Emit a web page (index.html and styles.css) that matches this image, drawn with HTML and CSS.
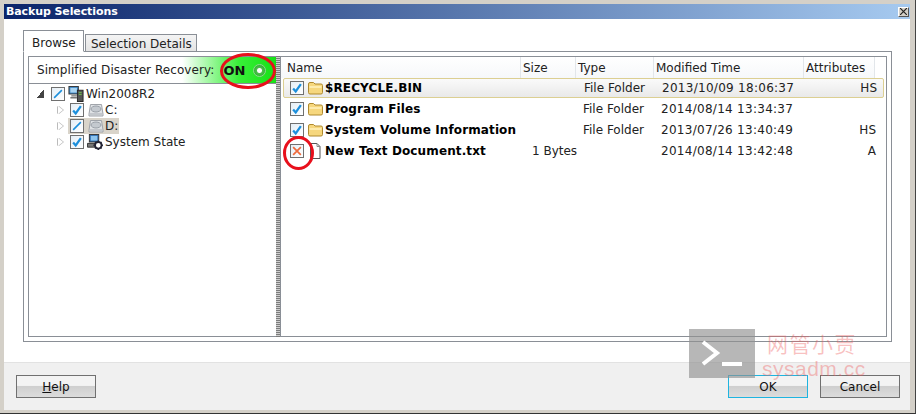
FILE: index.html
```html
<!DOCTYPE html>
<html lang="en">
<head>
  <meta charset="UTF-8" />
  <title>Backup Selections</title>
  <link rel="stylesheet" href="styles.css">
</head>
<body>
  <svg class="defs" width="0" height="0">
    <symbol id="check" viewBox="0 0 14 14"><path d="M2.5 7.5 L5.5 11 L11.5 2.5" fill="none" stroke="#1c8fdc" stroke-width="2.6"/></symbol>
    <symbol id="slash" viewBox="0 0 14 14"><path d="M2.5 11.5 L11.5 2.5" fill="none" stroke="#1c8fdc" stroke-width="1.8"/></symbol>
    <symbol id="cross" viewBox="0 0 14 14"><path d="M2.5 2.5 L11.5 11.5 M11.5 2.5 L2.5 11.5" fill="none" stroke="#ee6a3c" stroke-width="2"/></symbol>
    <symbol id="folder" viewBox="0 0 16 14">
      <path d="M1 3 Q1 1.500 2.500 1.500 H6 L7.500 3 H13.500 Q15 3 15 4.500 V11.500 Q15 13 13.500 13 H2.500 Q1 13 1 11.500 Z" fill="#f6d77e" stroke="#b08a2e"/>
      <path d="M2 6 H14" stroke="#fff2bf" stroke-width="1.500"/>
    </symbol>
    <symbol id="file" viewBox="0 0 12 16"><path d="M1.500 .5 H8 L11 3.500 V15.500 H1.500 Z" fill="#fff" stroke="#555"/><path d="M8 .5 V3.500 H11" fill="none" stroke="#888"/></symbol>
    <symbol id="disk" viewBox="0 0 16 14">
      <path d="M2.500 1.500 H13.500 L15 11 V13 H1 V11 Z" fill="#dfe2e5" stroke="#a0a4aa"/>
      <ellipse cx="8" cy="6" rx="5" ry="3" fill="#c4c9cf" stroke="#9aa0a8"/>
      <path d="M2 11 H14" stroke="#a8adb4"/>
    </symbol>
    <symbol id="server" viewBox="0 0 16 17">
      <rect x=".5" y=".5" width="10" height="8" fill="#3d86c6" stroke="#333"/>
      <rect x="2" y="2" width="7" height="5" fill="#a9d4f2"/>
      <rect x="9.500" y="4.500" width="6" height="12" fill="#555" stroke="#222"/>
      <path d="M11 7 H14 M11 9 H14" stroke="#6fc24a"/>
      <path d="M3 10.500 H9 M2 12.500 H9" stroke="#777" stroke-width="1.500"/>
    </symbol>
    <symbol id="state" viewBox="0 0 17 17">
      <rect x="2.500" y=".5" width="10" height="8" fill="#2d6fb4" stroke="#333"/>
      <rect x="4" y="2" width="7" height="5" fill="#8cc4ee"/>
      <path d="M.5 10 H9 V14 H.5 Z" fill="#777" stroke="#333"/>
      <circle cx="12" cy="12" r="3.500" fill="#fff" stroke="#223" stroke-width="2"/>
      <path d="M12 6.800 V8 M12 16 V17 M6.800 12 H8 M16 12 H17 M8.500 8.500 L9.400 9.400 M14.600 14.600 L15.500 15.500 M15.500 8.500 L14.600 9.400 M9.400 14.600 L8.500 15.500" stroke="#223" stroke-width="1.500"/>
    </symbol>
  </svg>

  <div class="window">
    <div class="titlebar">
      <span class="title">Backup Selections</span>
      <span class="close">
        <svg width="7" height="7" viewBox="0 0 7 7"><path d="M0 0 L7 7 M7 0 L0 7" stroke="#222" stroke-width="1.200"/></svg>
      </span>
    </div>

    <div class="content">
      <div class="tabs">
        <div class="tab active">Browse</div>
        <div class="tab">Selection Details</div>
      </div>

      <div class="panel">
        <div class="left">
          <div class="sdr">
            <span class="sdr-label">Simplified Disaster Recovery:</span>
            <b class="on">ON</b>
            <span class="led"></span>
          </div>
          <div class="tree">
            <div class="node root">
              <span class="tri open"></span>
              <span class="cb"><svg><use href="#slash"/></svg></span>
              <svg class="ico-server"><use href="#server"/></svg>
              <span class="label">Win2008R2</span>
            </div>
            <div class="node">
              <span class="tri"></span>
              <div class="node-body">
                <span class="cb"><svg><use href="#check"/></svg></span>
                <svg class="ico-disk"><use href="#disk"/></svg>
                <span class="label">C:</span>
              </div>
            </div>
            <div class="node">
              <span class="tri"></span>
              <div class="node-body current">
                <span class="cb"><svg><use href="#slash"/></svg></span>
                <svg class="ico-disk"><use href="#disk"/></svg>
                <span class="label">D:</span>
              </div>
            </div>
            <div class="node">
              <span class="tri"></span>
              <div class="node-body">
                <span class="cb"><svg><use href="#check"/></svg></span>
                <svg class="ico-server"><use href="#state"/></svg>
                <span class="label">System State</span>
              </div>
            </div>
          </div>
        </div>

        <div class="splitter"></div>

        <div class="right">
          <div class="row head">
            <div class="th">Name</div>
            <div class="th">Size</div>
            <div class="th">Type</div>
            <div class="th">Modified Time</div>
            <div class="th">Attributes</div>
          </div>
          <div class="row item selected">
            <div class="name"><span class="cb"><svg><use href="#check"/></svg></span><svg class="ico-folder"><use href="#folder"/></svg><b>$RECYCLE.BIN</b></div>
            <div class="size"></div>
            <div class="type">File Folder</div>
            <div class="time">2013/10/09 18:06:37</div>
            <div class="attr">HS</div>
          </div>
          <div class="row item">
            <div class="name"><span class="cb"><svg><use href="#check"/></svg></span><svg class="ico-folder"><use href="#folder"/></svg><b>Program Files</b></div>
            <div class="size"></div>
            <div class="type">File Folder</div>
            <div class="time">2014/08/14 13:34:37</div>
            <div class="attr"></div>
          </div>
          <div class="row item">
            <div class="name"><span class="cb"><svg><use href="#check"/></svg></span><svg class="ico-folder"><use href="#folder"/></svg><b>System Volume Information</b></div>
            <div class="size"></div>
            <div class="type">File Folder</div>
            <div class="time">2013/07/26 13:40:49</div>
            <div class="attr">HS</div>
          </div>
          <div class="row item">
            <div class="name"><span class="cb"><svg><use href="#cross"/></svg></span><svg class="ico-file"><use href="#file"/></svg><b>New Text Document.txt</b></div>
            <div class="size">1 Bytes</div>
            <div class="type"></div>
            <div class="time">2014/08/14 13:42:48</div>
            <div class="attr">A</div>
          </div>
        </div>
      </div>
    </div>

    <div class="footer">
      <button class="btn"><u>H</u>elp</button>
      <div class="actions">
        <button class="btn default">OK</button>
        <button class="btn">Cancel</button>
      </div>
    </div>
  </div>

  <!-- red marks drawn over the screenshot -->
  <div class="ring ring-on"></div>
  <div class="ring ring-x"></div>

  <!-- site watermark -->
  <div class="wm-box">
    <svg width="66" height="49" viewBox="0 0 66 49"><path d="M14 13 L28 24 L14 35" fill="none" stroke="#fff" stroke-width="4"/><path d="M33 35 H53" stroke="#fff" stroke-width="4"/></svg>
  </div>
  <div class="wm-text">
    <div class="wm-cn">网管小贾</div>
    <div class="wm-en">sysadm.cc</div>
  </div>
</body>
</html>
```

FILE: styles.css
```css
html, body { margin: 0; padding: 0; }
body { width: 916px; height: 414px; overflow: hidden; position: relative; font-family: "DejaVu Sans", sans-serif; font-size: 12px; color: #222; background: #d4d0c8; }
.defs { position: absolute; }

.window { height: 414px; box-sizing: border-box; padding: 4px 5px 3px 4px; display: flex; flex-direction: column; border-right: 1px solid #444; border-bottom: 1px solid #333; }

.titlebar { flex: none; height: 15px; display: flex; align-items: center; justify-content: space-between; padding: 0 1px 0 2px; background: linear-gradient(to right, #0a246a, #a6caf0); }
.title { color: #fff; font-weight: bold; font-size: 11px; letter-spacing: -.1px; }
.close { width: 11px; height: 10px; display: flex; align-items: center; justify-content: center; background: #d4d0c8; border: 1px solid; border-color: #fff #555 #555 #fff; box-sizing: border-box; }

.content { flex: 1; background: #fff; padding: 11px 18px 20px 19px; display: flex; flex-direction: column; min-height: 0; }

.tabs { flex: none; height: 22px; display: flex; align-items: flex-end; margin-bottom: -1px; position: relative; z-index: 1; }
.tab { height: 18px; box-sizing: border-box; padding: 1px 5px 0 5px; width: 112px; margin-left: 1px; border: 1px solid #8a8f96; border-bottom: 1px solid #8a8f96; background: linear-gradient(#f4f4f4, #e4e4e4); white-space: nowrap; line-height: 16px; }
.tab.active { width: 61px; margin-left: 0; height: 22px; padding: 4px 0 0 8px; background: #fff; border-bottom-color: #fff; }

.panel { flex: 1; min-height: 0; border: 1px solid #8a8f96; padding: 4px; display: flex; }
.left { width: 248px; flex: none; border: 1px solid #8a8f96; border-right: 0; display: flex; flex-direction: column; box-sizing: border-box; }
.splitter { width: 4px; flex: none; background: repeating-linear-gradient(#7c7c7c 0 1px, #cfcfcf 1px 2px); }
.right { flex: 1; border: 1px solid #8a8f96; box-sizing: border-box; min-width: 0; }

.sdr { flex: none; height: 26px; display: flex; align-items: center; padding-left: 8px; border-bottom: 1px solid #8a8f96; background: linear-gradient(to right, #fff 62%, #38f038 85%, #16e016); }
.sdr-label { letter-spacing: .07px; }
.on { margin-left: 9px; font-size: 13px; color: #111; }
.led { width: 13px; height: 13px; box-sizing: border-box; margin-left: 8px; border-radius: 50%; background: radial-gradient(circle, #fff 0 2px, #4bbf4b 3px, #1fa81f); border: 1px solid #8ed88e; }

.tree { padding-top: 2px; }
.node { height: 16px; display: flex; align-items: center; width: max-content; padding-left: 29px; }
.node.root { padding-left: 7px; }
.node-body { height: 16px; display: flex; align-items: center; margin-left: -2px; padding: 0 1px 0 2px; }
.node-body.current { background: #d9d4ca; }
.tri { width: 0; height: 0; border-left: 5px solid #fff; border-top: 4px solid transparent; border-bottom: 4px solid transparent; flex: none; margin-right: 7px; filter: drop-shadow(1px 0 0 #bbb) drop-shadow(-1px 0 0 #bbb); }
.tri.open { width: 8px; height: 8px; border: 0; background: linear-gradient(135deg, transparent 50%, #444 50%); margin-right: 7px; filter: none; }
.cb { width: 14px; height: 14px; flex: none; box-sizing: border-box; border: 1px solid #6f6f6f; background: linear-gradient(135deg, #e4eef6, #fff); display: block; }
.cb svg { width: 12px; height: 12px; display: block; }
.ico-server { width: 16px; height: 16px; margin: 0 2px 0 3px; flex: none; }
.ico-disk { width: 16px; height: 14px; margin: 0 1px 0 4px; flex: none; }
.label { line-height: 16px; }

.row { display: grid; grid-template-columns: 240px 55px 78px 150px 71px; }
.head { height: 21px; }
.th { box-sizing: border-box; padding: 3px 0 0 2px; border-right: 1px solid #e2e6ea; background: linear-gradient(#fff, #f6f8fa); line-height: 16px; white-space: nowrap; }
.th:first-child { padding-left: 6px; }

.item { height: 21px; align-items: center; margin: 0 2px; }
.item.selected { height: 20px; box-sizing: border-box; border: 1px solid #dccf92; border-radius: 2px; background: linear-gradient(#fafafa, #e9e9e9); }
.item.selected .name { padding-left: 6px; }
.name { display: flex; align-items: center; padding-left: 7px; white-space: nowrap; color: #000; }
.name b { letter-spacing: .12px; }
.ico-folder { width: 17px; height: 14px; margin: 0 1px 0 3px; flex: none; }
.ico-file { width: 12px; height: 16px; margin: 0 4px 0 5px; flex: none; }
.size { padding-left: 9px; white-space: nowrap; }
.type { padding-left: 5px; white-space: nowrap; }
.time { padding-left: 5px; white-space: nowrap; letter-spacing: .28px; }
.attr { text-align: right; padding-right: 1px; }

.footer { flex: none; height: 48px; box-sizing: border-box; padding: 12px 10px 0 12px; background: #f0f0f0; border-top: 1px solid #e2e2e2; display: flex; justify-content: space-between; align-items: flex-start; }
.actions { display: flex; gap: 12px; }
.btn { width: 80px; height: 23px; padding: 0; border: 1px solid #707070; font: 12px "DejaVu Sans", sans-serif; color: #111; background: linear-gradient(#f3f3f3 0 45%, #cfcfcf 50%, #dcdcdc); }
.btn.default { border-color: #1eb4e0; }

.ring { position: absolute; border: 3px solid #e8101c; border-radius: 50%; box-sizing: border-box; }
.ring-on { left: 220px; top: 53px; width: 56px; height: 36px; }
.ring-x { left: 283px; top: 136px; width: 31px; height: 34px; }

.wm-box { position: absolute; left: 689px; top: 329px; width: 66px; height: 49px; background: rgba(145, 145, 145, .65); }
.wm-box svg { display: block; }
.wm-text { position: absolute; left: 762px; top: 331px; width: 100px; color: rgba(238, 90, 90, .38); text-align: center; }
.wm-cn { font-family: "Noto Sans CJK SC", sans-serif; font-size: 21px; line-height: 24px; letter-spacing: 1.500px; }
.wm-en { font-family: "Liberation Sans", sans-serif; font-size: 21px; line-height: 24px; margin-top: 2px; letter-spacing: .5px; }
```
